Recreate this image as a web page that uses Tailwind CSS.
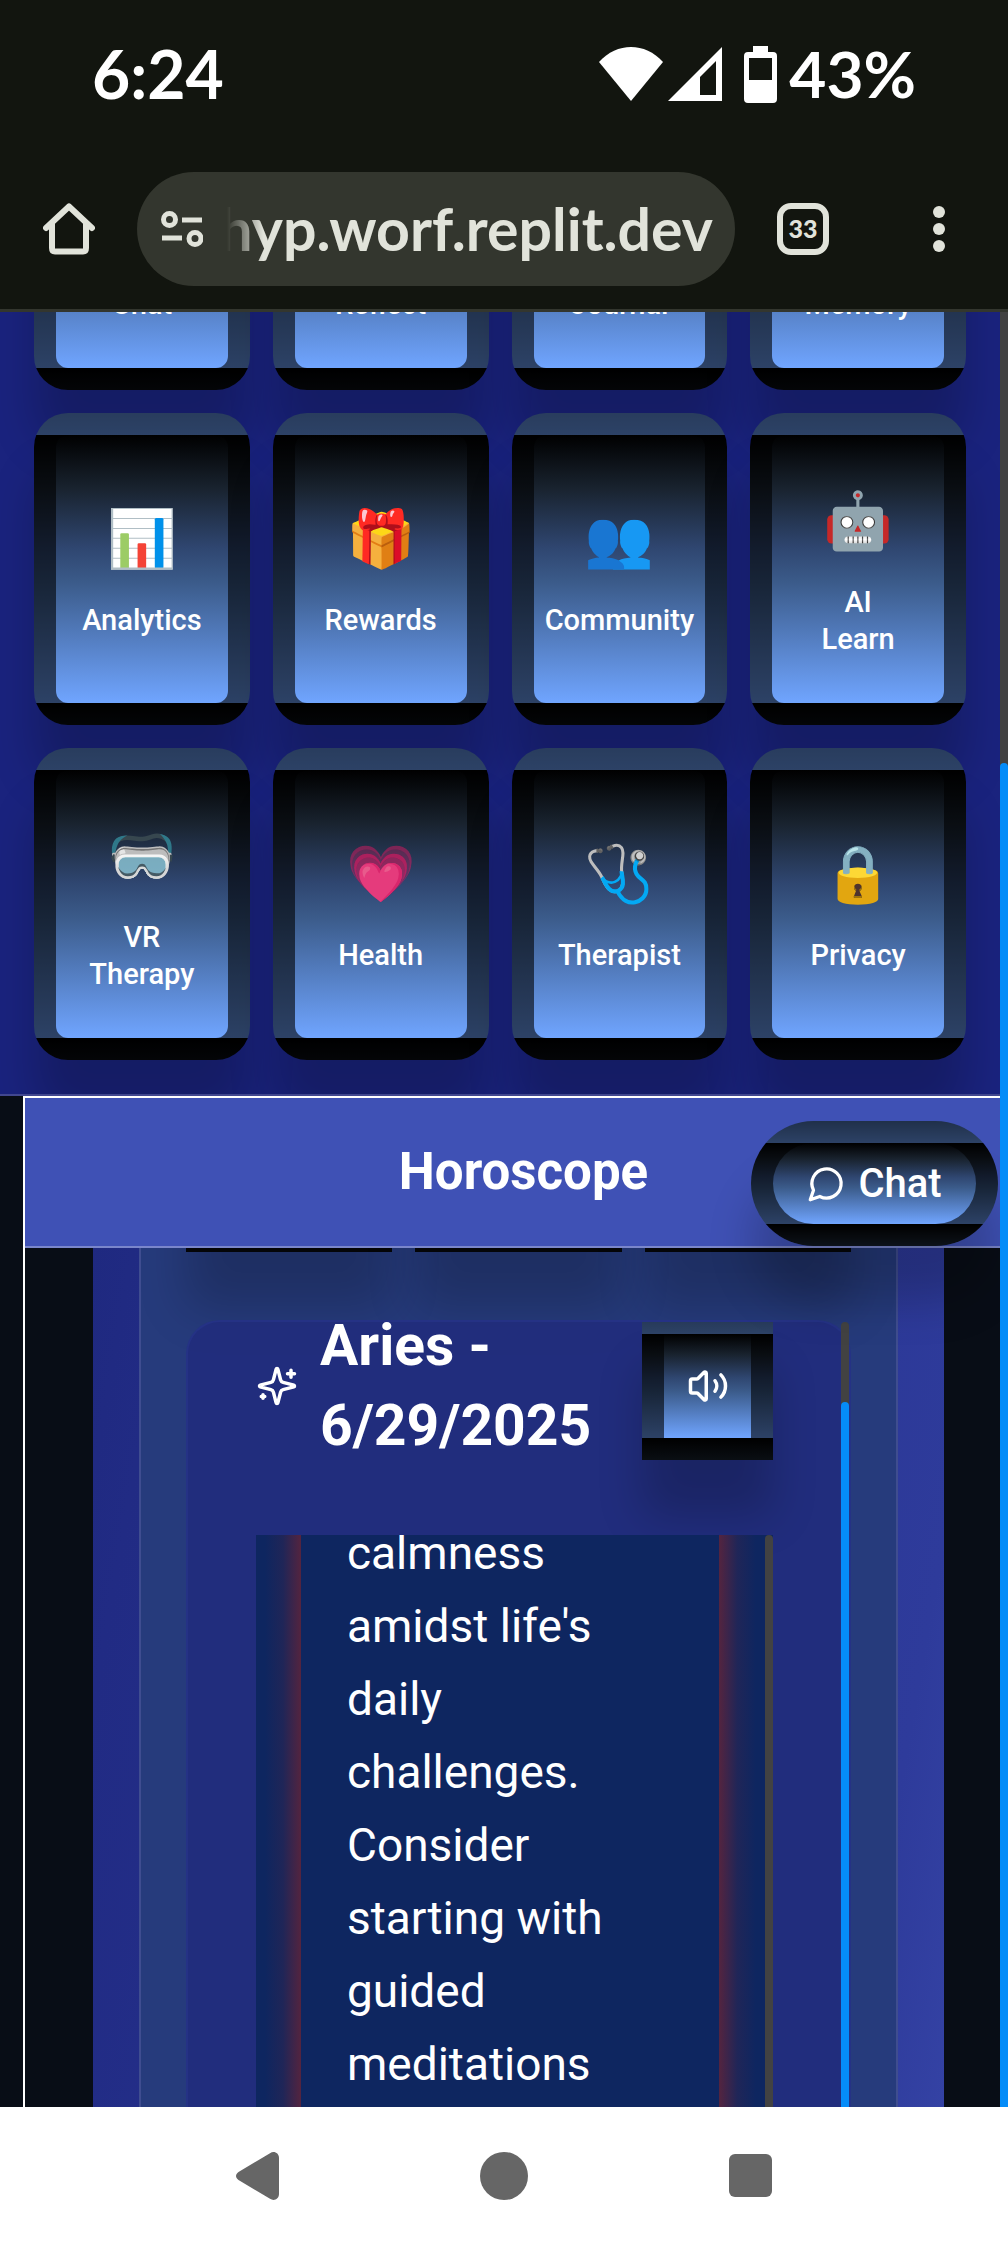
<!DOCTYPE html>
<html lang="en">
<head>
<meta charset="utf-8">
<meta name="viewport" content="width=device-width, initial-scale=1">
<title>Horoscope</title>
<script src="https://cdn.jsdelivr.net/npm/@tailwindcss/browser@4"></script>
</head>
<body class="flex min-h-screen flex-col bg-[#080d16] font-[Roboto,sans-serif] text-white">

<!-- Status bar and browser toolbar -->
<header class="border-b-[3px] border-[#33362e] bg-[#12150f] font-[Lato,sans-serif] font-bold">
  <div class="flex h-[148px] items-center justify-between px-[92px]">
    <span class="text-[66px] leading-[80px]">6:24</span>
    <div class="flex items-center">
      <svg class="h-[54px] w-[64px]" viewBox="0 0 64 54" fill="#fff"><path d="M0 15C18-5 46-5 64 15L32 54z"/></svg>
      <svg class="ml-[5px] h-[54px] w-[54px]" viewBox="0 0 54 54" fill="#fff" fill-rule="evenodd"><path d="M54 0V54H0zM48 14L32 30V48H48z"/></svg>
      <svg class="ml-[22px] h-[57px] w-[33px]" viewBox="0 0 33 57" fill="#fff" fill-rule="evenodd"><path d="M9 0H24V6H29Q33 6 33 10V53Q33 57 29 57H4Q0 57 0 53V10Q0 6 4 6H9zM5 12V34H28V12z"/></svg>
      <span class="ml-3 text-[64px] leading-[80px]">43%</span>
    </div>
  </div>
  <div class="flex h-[161px] items-center pl-[43px] text-[#e1e3da]">
    <button aria-label="Home">
      <svg class="block h-[52px] w-[52px]" viewBox="0 0 52 52" fill="none" stroke="#e1e3da" stroke-width="6" stroke-linecap="round" stroke-linejoin="round"><path d="M3 25L26 3.500L49 25M9 21V45Q9 48.500 12 48.500H40Q43 48.500 43 45V21"/></svg>
    </button>
    <div class="mx-[42px] flex h-[114px] min-w-0 flex-1 items-center rounded-full bg-[#33362e] pr-[22px] pl-6">
      <svg class="h-[36px] w-[42px] shrink-0" viewBox="0 0 42 36" fill="none" stroke="#e1e3da" stroke-width="5"><circle cx="8.500" cy="8.500" r="6"/><path d="M21 9H41M1 27H21"/><circle cx="34" cy="27.500" r="6"/></svg>
      <div class="ml-6 flex min-w-0 flex-1 justify-end overflow-hidden mask-[linear-gradient(90deg,transparent,#000_36px)]">
        <span class="text-[59px] leading-[72px] whitespace-nowrap">hyp.worf.replit.dev</span>
      </div>
    </div>
    <button class="flex h-[52px] w-[52px] items-center justify-center rounded-[14px] border-[6px] border-[#e1e3da] text-[25px] font-black">33</button>
    <button class="mr-[63px] ml-[104px] flex flex-col gap-[5px]" aria-label="Menu">
      <i class="size-3 rounded-full bg-[#e1e3da]"></i><i class="size-3 rounded-full bg-[#e1e3da]"></i><i class="size-3 rounded-full bg-[#e1e3da]"></i>
    </button>
  </div>
</header>

<main class="flex flex-1 overflow-hidden">
  <div class="flex min-w-0 flex-1 flex-col">

    <!-- Feature grid, scrolled part of the way down -->
    <section class="overflow-hidden border-b-2 border-[#41478f] bg-[#1a237e] px-[34px] pb-[34px]">
      <div class="-mt-[234px] grid grid-cols-4 gap-[23px] text-[29px] leading-[37px] font-medium">
        <button class="flex h-[312px] items-end justify-center rounded-[34px] border-[22px] border-black/60 bg-linear-[#000,#19232f_20%,#2f4670_42%,#3b5b8a_55%,#70a5ff] pb-[45px] shadow-[0_56px_45px_#0003]">Chat</button>
        <button class="flex h-[312px] items-end justify-center rounded-[34px] border-[22px] border-black/60 bg-linear-[#000,#19232f_20%,#2f4670_42%,#3b5b8a_55%,#70a5ff] pb-[45px] shadow-[0_56px_45px_#0003]">Reflect</button>
        <button class="flex h-[312px] items-end justify-center rounded-[34px] border-[22px] border-black/60 bg-linear-[#000,#19232f_20%,#2f4670_42%,#3b5b8a_55%,#70a5ff] pb-[45px] shadow-[0_56px_45px_#0003]">Journal</button>
        <button class="flex h-[312px] items-end justify-center rounded-[34px] border-[22px] border-black/60 bg-linear-[#000,#19232f_20%,#2f4670_42%,#3b5b8a_55%,#70a5ff] pb-[45px] shadow-[0_56px_45px_#0003]">Memory</button>

        <button class="flex h-[312px] flex-col items-center justify-center rounded-[34px] border-[22px] border-black/60 bg-linear-[#000,#19232f_20%,#2f4670_42%,#3b5b8a_55%,#70a5ff] shadow-[0_56px_45px_#0003]"><span class="mb-[23px] text-[56px] leading-[80px]">📊</span>Analytics</button>
        <button class="flex h-[312px] flex-col items-center justify-center rounded-[34px] border-[22px] border-black/60 bg-linear-[#000,#19232f_20%,#2f4670_42%,#3b5b8a_55%,#70a5ff] shadow-[0_56px_45px_#0003]"><span class="mb-[23px] text-[56px] leading-[80px]">🎁</span>Rewards</button>
        <button class="flex h-[312px] flex-col items-center justify-center rounded-[34px] border-[22px] border-black/60 bg-linear-[#000,#19232f_20%,#2f4670_42%,#3b5b8a_55%,#70a5ff] shadow-[0_56px_45px_#0003]"><span class="mb-[23px] text-[56px] leading-[80px]">👥</span>Community</button>
        <button class="flex h-[312px] flex-col items-center justify-center rounded-[34px] border-[22px] border-black/60 bg-linear-[#000,#19232f_20%,#2f4670_42%,#3b5b8a_55%,#70a5ff] shadow-[0_56px_45px_#0003]"><span class="mb-[23px] text-[56px] leading-[80px]">🤖</span><span>AI<br>Learn</span></button>

        <button class="flex h-[312px] flex-col items-center justify-center rounded-[34px] border-[22px] border-black/60 bg-linear-[#000,#19232f_20%,#2f4670_42%,#3b5b8a_55%,#70a5ff] shadow-[0_56px_45px_#0003]"><span class="mb-[23px] text-[56px] leading-[80px]">🥽</span><span>VR<br>Therapy</span></button>
        <button class="flex h-[312px] flex-col items-center justify-center rounded-[34px] border-[22px] border-black/60 bg-linear-[#000,#19232f_20%,#2f4670_42%,#3b5b8a_55%,#70a5ff] shadow-[0_56px_45px_#0003]"><span class="mb-[23px] text-[56px] leading-[80px]">💗</span>Health</button>
        <button class="flex h-[312px] flex-col items-center justify-center rounded-[34px] border-[22px] border-black/60 bg-linear-[#000,#19232f_20%,#2f4670_42%,#3b5b8a_55%,#70a5ff] shadow-[0_56px_45px_#0003]"><span class="mb-[23px] text-[56px] leading-[80px]">🩺</span>Therapist</button>
        <button class="flex h-[312px] flex-col items-center justify-center rounded-[34px] border-[22px] border-black/60 bg-linear-[#000,#19232f_20%,#2f4670_42%,#3b5b8a_55%,#70a5ff] shadow-[0_56px_45px_#0003]"><span class="mb-[23px] text-[56px] leading-[80px]">🔒</span>Privacy</button>
      </div>
    </section>

    <!-- Horoscope panel -->
    <section class="relative ml-[23px] flex flex-1 flex-col border-t-2 border-l-2 border-white">
      <div class="flex h-[150px] items-center justify-center border-b-2 border-[#7a86cb] bg-[#3f51b5] pl-[22px]">
        <h1 class="text-[51px] leading-[72px] font-bold">Horoscope</h1>
      </div>
      <button class="absolute top-[23px] right-[2px] z-10 flex h-[125px] w-[247px] items-center justify-center gap-[12px] rounded-full border-[22px] border-black/60 bg-linear-[#000,#19232f_20%,#2f4670_42%,#3b5b8a_55%,#70a5ff] text-[40px] font-medium shadow-[0_56px_45px_#0003]">
        <svg class="size-[39px]" viewBox="0 0 24 24" fill="none" stroke="#fff" stroke-width="2" stroke-linecap="round" stroke-linejoin="round"><path d="M7.900 20A9 9 0 1 0 4 16.100L2 22Z"/></svg>Chat
      </button>

      <div class="mr-[56px] ml-[68px] flex flex-1 bg-linear-[100deg,#1f2980,#212b84_8%,#2e3b9b_90%,#3442a4] px-[46px]">
        <div class="flex min-w-0 flex-1 flex-col overflow-hidden border-x-2 border-[#3f4d90] bg-[#263b7c] px-[45px]">
          <div class="-mt-[144px] grid shrink-0 grid-cols-3 gap-[23px]">
            <div class="h-[148px] border-[22px] border-black/60 bg-[#0a0e16] shadow-[0_56px_45px_#0003]"></div>
            <div class="h-[148px] border-[22px] border-black/60 bg-[#0a0e16] shadow-[0_56px_45px_#0003]"></div>
            <div class="h-[148px] border-[22px] border-black/60 bg-[#0a0e16] shadow-[0_56px_45px_#0003]"></div>
          </div>

          <article class="mt-[68px] flex flex-1 rounded-t-[34px] border-2 border-b-0 border-[#253285] bg-[#212b7d]/80">
            <div class="flex min-w-0 flex-1 flex-col overflow-hidden px-[68px]">
              <div class="-mt-4 flex h-[160px] shrink-0 items-center">
                <svg class="size-[42px] shrink-0" viewBox="0 0 24 24" fill="none" stroke="#fff" stroke-width="2" stroke-linecap="round" stroke-linejoin="round"><path d="M9.937 15.500A2 2 0 0 0 8.500 14.063l-6.135-1.582a.5.5 0 0 1 0-.962L8.500 9.936A2 2 0 0 0 9.937 8.500l1.582-6.135a.5.5 0 0 1 .963 0L14.063 8.500A2 2 0 0 0 15.500 9.937l6.135 1.581a.5.5 0 0 1 0 .964L15.500 14.063a2 2 0 0 0-1.437 1.437l-1.582 6.135a.5.5 0 0 1-.963 0z"/><path d="M20 3v4M22 5h-4M4 17v2M5 18H3"/></svg>
                <h2 class="ml-[22px] flex-1 text-[57px] leading-[80px] font-bold">Aries -<br>6/29/2025</h2>
                <button aria-label="Read aloud" class="flex h-[148px] w-[131px] items-center justify-center border-[22px] border-black/60 bg-linear-[#000,#19232f_20%,#2f4670_42%,#3b5b8a_55%,#70a5ff] shadow-[0_56px_45px_#0003]">
                  <svg class="size-[42px]" viewBox="0 0 24 24" fill="none" stroke="#fff" stroke-width="2" stroke-linecap="round" stroke-linejoin="round"><path d="M11 4.702a.705.705 0 0 0-1.203-.498L6.413 7.587A1.400 1.400 0 0 1 5.416 8H3a1 1 0 0 0-1 1v6a1 1 0 0 0 1 1h2.416a1.400 1.400 0 0 1 .997.413l3.383 3.384A.705.705 0 0 0 11 19.298zM16 9a5 5 0 0 1 0 6M19.364 18.364a9 9 0 0 0 0-12.728"/></svg>
                </button>
              </div>
              <div class="mt-[69px] flex flex-1 overflow-hidden bg-[#0e2660]">
                <div class="w-[45px] bg-linear-[90deg,transparent_20%,#54243f40_60%,#54243f]"></div>
                <p class="-mt-[18px] flex-1 px-[46px] text-[46px] leading-[73px]">calmness amidst life's daily challenges. Consider starting with guided meditations</p>
                <div class="w-[46px] bg-linear-[270deg,transparent_20%,#54243f40_60%,#54243f]"></div>
                <div class="w-2 rounded-t-full bg-[#424242]"></div>
              </div>
            </div>
            <div class="flex w-2 flex-col rounded-t-full bg-[#424242] pt-20">
              <div class="flex-1 rounded-t-full bg-[#058cf8]"></div>
            </div>
          </article>
        </div>
      </div>
    </section>
  </div>

  <!-- Page scrollbar -->
  <div class="z-20 flex w-2 flex-col bg-[#424242] pt-[451px]">
    <div class="flex-1 rounded-t-full bg-[#058cf8]"></div>
  </div>
</main>

<nav class="relative z-30 flex h-[137px] items-center justify-center gap-[201px] bg-white">
  <button aria-label="Back"><svg class="block h-[48px] w-[43px]" viewBox="0 0 43 48" fill="#666"><path d="M34 1.200C38-1.500 43 1 43 6V42C43 47 38 49.500 34 46.800L2.500 28C-.8 25.500-.8 22.500 2.500 20z"/></svg></button>
  <button aria-label="Home" class="size-12 rounded-full bg-[#666]"></button>
  <button aria-label="Overview" class="size-[43px] rounded-[6px] bg-[#666]"></button>
</nav>
</body>
</html>
